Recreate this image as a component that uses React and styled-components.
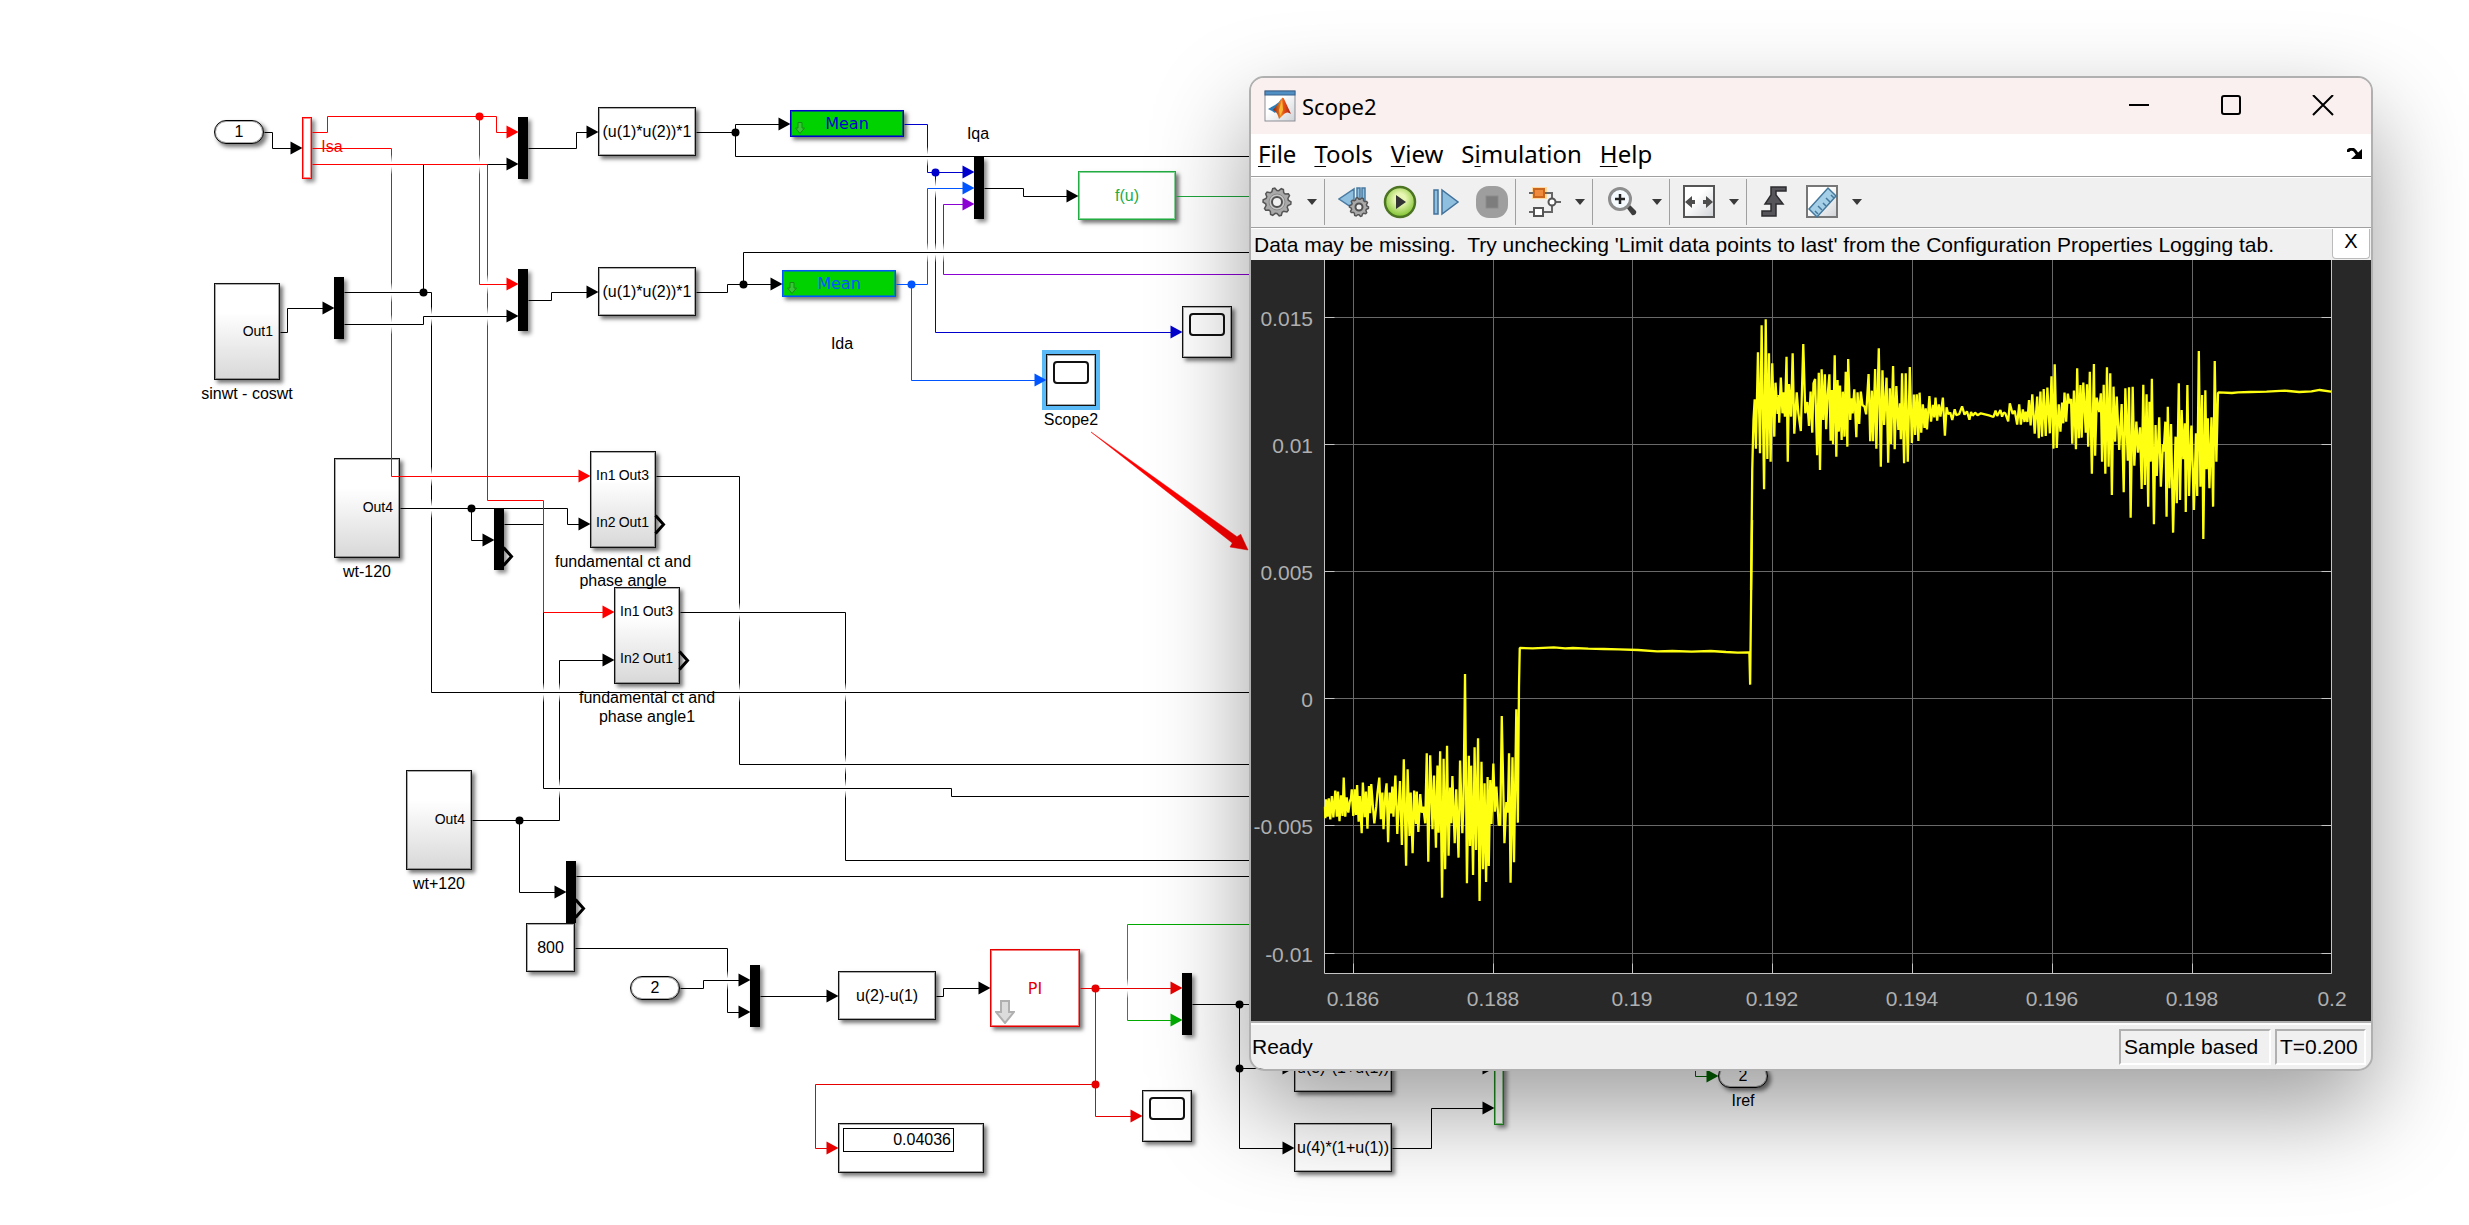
import React from 'react'
import styled, { createGlobalStyle } from 'styled-components'

const BLACK = '#000'
const RED = '#ff0000'
const CRIMSON = '#e60000'
const NAVY = '#0000cd'
const BLUE = '#0055ff'
const PURPLE = '#8b00d3'
const GREEN = '#00aa00'
const LEAF = '#1ea43c'
const FOREST = '#006400'

// signal lines, [color, path]
const wires = [
  [BLACK, 'M264 132H272V148H292'],
  [BLACK, 'M423 292V164H508'],
  [RED, 'M312 132H327V116H496V132H508'],
  [RED, 'M312 148H391V476H580'],
  [RED, 'M479 116V284H508'],
  [BLACK, 'M280 332H287V308H324'],
  [BLACK, 'M344 292H431V692H1252'],
  [BLACK, 'M344 324H423V316H508'],
  [BLACK, 'M528 148H576V132H588'],
  [BLACK, 'M528 300H551V292H588'],
  [BLACK, 'M696 132H735M780 124H735V156H1252'],
  [BLACK, 'M696 292H727V284H772M743 284V252H1252'],
  [NAVY, 'M904 124H927V172H964M935 172V332H1172'],
  [BLUE, 'M896 284H927V188H964M911 284V380H1036'],
  [PURPLE, 'M1252 274H943V204H964'],
  [BLACK, 'M984 188H1023V196H1068'],
  [LEAF, 'M1176 196H1252'],
  [BLACK, 'M400 508H567V524H580M471 508V540H484'],
  [BLACK, 'M504 524H543V788H951V796H1252'],
  [RED, 'M312 164H487V500H543V612H604'],
  [BLACK, 'M656 476H739V764H1252'],
  [BLACK, 'M680 612H845V860H1252'],
  [BLACK, 'M472 820H559V660H604M519 820V892H556'],
  [BLACK, 'M576 876H1252'],
  [BLACK, 'M575 948H727V1012H740'],
  [BLACK, 'M680 988H703V980H740'],
  [BLACK, 'M760 996H828'],
  [BLACK, 'M936 996H943V988H980'],
  [GREEN, 'M1252 924H1127V1020H1172'],
  [CRIMSON, 'M1080 988H1172M1095 988V1116H1132M1095 1084H815V1148H828'],
  [BLACK, 'M1192 1004H1260M1239 1004V1148H1284M1239 1068H1284'],
  [BLACK, 'M1392 1148H1431V1108H1484M1450 1068H1484'],
  [FOREST, 'M1695 1040V1076H1708'],
]

// places where a vertical line fades out under a horizontal one
const crossings = [
  [391, 164, RED], [391, 292, BLACK], [391, 324, BLACK],
  [431, 316, BLACK], [431, 476, RED], [431, 508, BLACK],
  [479, 164, RED], [487, 284, RED], [487, 316, BLACK],
  [927, 156, BLACK], [927, 252, BLACK], [935, 188, BLUE],
  [935, 252, BLACK], [943, 252, BLACK],
  [543, 692, BLACK], [559, 692, BLACK], [559, 788, BLACK],
  [739, 612, BLACK], [739, 692, BLACK],
  [845, 692, BLACK], [845, 764, BLACK], [845, 788, BLACK],
  [727, 980, BLACK], [1127, 988, CRIMSON],
]

const arrows = [
  [302, 148, BLACK], [518, 132, RED], [518, 164, BLACK], [518, 284, RED],
  [518, 316, BLACK], [334, 308, BLACK], [598, 132, BLACK], [598, 292, BLACK],
  [790, 124, BLACK], [782, 284, BLACK], [974, 172, NAVY], [974, 188, BLUE],
  [974, 204, PURPLE], [1078, 196, BLACK], [1182, 332, NAVY], [1046, 380, BLUE],
  [590, 476, RED], [590, 524, BLACK], [494, 540, BLACK], [614, 612, RED],
  [614, 660, BLACK], [566, 892, BLACK], [750, 980, BLACK], [750, 1012, BLACK],
  [838, 996, BLACK], [990, 988, BLACK], [1182, 988, CRIMSON], [1182, 1020, GREEN],
  [1142, 1116, CRIMSON], [838, 1148, CRIMSON], [1294, 1068, BLACK],
  [1294, 1148, BLACK], [1494, 1108, BLACK], [1494, 1068, BLACK], [1718, 1076, FOREST],
]

const dots = [
  [479, 116, RED], [423, 292, BLACK], [735, 132, BLACK], [743, 284, BLACK],
  [935, 172, NAVY], [911, 284, BLUE], [471, 508, BLACK], [519, 820, BLACK],
  [1095, 988, CRIMSON], [1095, 1084, CRIMSON], [1239, 1004, BLACK], [1239, 1068, BLACK],
]

const openPorts = [[504, 556], [656, 524], [680, 660], [576, 908]]

const muxes = [
  [518, 117], [518, 269], [334, 277], [974, 157], [494, 508], [566, 861], [750, 965], [1182, 973],
]

const functions = [
  { x: 598, y: 107, text: '(u(1)*u(2))*1' },
  { x: 598, y: 267, text: '(u(1)*u(2))*1' },
  { x: 838, y: 971, text: 'u(2)-u(1)' },
  { x: 1294, y: 1043, text: 'u(3)*(1+u(1))' },
  { x: 1294, y: 1123, text: 'u(4)*(1+u(1))' },
  { x: 1078, y: 171, text: 'f(u)', color: '#22ac42' },
]

const captions = [
  { x: 247, y: 384, text: 'sinwt - coswt' },
  { x: 367, y: 562, text: 'wt-120' },
  { x: 439, y: 874, text: 'wt+120' },
  { x: 623, y: 552, text: 'fundamental ct and\nphase angle' },
  { x: 647, y: 688, text: 'fundamental ct and\nphase angle1' },
  { x: 978, y: 124, text: 'Iqa' },
  { x: 842, y: 334, text: 'Ida' },
  { x: 1071, y: 410, text: 'Scope2' },
  { x: 1743, y: 1091, text: 'Iref' },
  { x: 332, y: 137, text: 'Isa', color: RED },
]

const xTicks = [
  [102, '0.186'], [242, '0.188'], [381, '0.19'], [521, '0.192'],
  [661, '0.194'], [801, '0.196'], [941, '0.198'], [1081, '0.2'],
]
const yTicks = [
  [57, '0.015'], [184, '0.01'], [311, '0.005'], [438, '0'], [565, '-0.005'], [693, '-0.01'],
]

const traceStart =
  'M222 860 223 895 225 838 229 890 232 835 236 898 240 828 244 892 249 812 253 890 256 815 260 904 264 826 268 888 271 773 275 890 279 832 283 878 287 845 290 835 292 808 296 888 300 808 303 885 306 795 310 905 313 828 318 940 321 788 326 892 329 815 333 926 337 798 340 880 343 792 347 855 351 910 356 860 359 820 364 773 368 898 372 818 375 928 380 820 383 790 387 967 391 818 395 880 398 800 401 890 406 767 411 942 418 783 423 975 428 718 434 1037 438 748 443 948 446 818 451 1000 455 812 460 912 462 815 466 936 471 822 475 878 479 860 484 910 488 700 492 1025 497 706 503 928 507 767 512 983 516 737 519 938 523 694 528 1133 532 716 536 1048 541 677 545 1007 549 803 552 910 555 768 561 970 565 808 571 1013 575 722 581 940 584 850 588 462 593 1090 598 707 601 978 604 737 609 1065 613 682 617 990 622 655 626 1143 631 725 635 1048 639 790 643 1086 647 771 650 1038 654 780 657 912 662 731 666 875 670 800 676 915 680 915 684 588 691 970 696 846 700 878 703 700 707 1088 712 712 716 1027 722 568 726 908 729 500 731 384 765 385 820 382 850 385 870 384 910 386 950 387 990 388 1040 390 1090 394 1130 393 1180 395 1230 393 1270 396 1300 398 1331 397 1333 494 1336 180 1338 0'

const traceEnd =
  'M27 960 30 600 33 450 36 388 39 536 44 247 49 550 53 166 59 658 63 148 67 567 71 250 75 575 79 280 84 500 87 338 92 432 95 375 96 458 100 323 104 430 107 367 110 440 114 260 117 575 120 342 125 440 129 250 133 491 139 367 143 430 149 483 155 222 160 430 165 396 169 468 173 365 177 488 180 340 184 327 189 556 193 308 196 600 200 298 204 450 208 313 211 478 215 372 219 313 222 512 225 360 228 523 232 256 236 560 239 330 242 485 245 347 249 510 252 365 256 500 259 305 263 530 265 267 270 450 273 385 276 430 280 358 285 502 288 367 292 462 296 365 300 405 305 410 309 433 315 312 319 514 323 362 326 514 331 297 334 536 340 235 345 590 349 301 353 465 359 323 363 578 367 355 370 522 375 288 379 538 383 348 388 480 392 400 394 508 397 310 402 580 406 310 411 575 416 291 421 519 426 374 429 495 433 373 437 513 440 368 444 488 448 403 452 474 455 415 458 478 464 378 468 455 473 405 476 442 479 383 483 452 487 403 491 440 497 383 502 497 506 412 510 432 515 428 520 450 526 418 530 436 537 432 544 409 550 434 556 424 562 449 566 426 570 437 576 428 582 436 590 430 600 433 610 436 621 441 626 422 630 438 638 420 642 440 646 428 650 430 657 454 661 400 668 432 673 422 679 464 684 403 688 464 693 418 697 456 700 425 704 456 708 390 712 466 716 373 722 491 728 380 732 505 736 365 740 500 744 357 749 498 753 353 759 490 763 319 768 536 771 283 776 534 781 403 785 485 789 398 792 460 795 368 799 455 803 371 807 400 811 387 814 521 818 362 823 538 826 295 830 505 834 345 837 503 841 338 847 488 850 343 853 530 857 305 862 611 867 282 870 557 874 383 880 426 884 370 887 575 891 344 895 611 899 292 903 590 907 310 911 675 915 350 919 515 923 380 929 540 935 402 940 667 944 355 950 572 953 352 957 743 962 350 966 587 971 455 975 548 980 472 984 657 988 344 992 645 996 373 1000 710 1003 395 1006 575 1009 326 1014 763 1018 465 1021 618 1027 442 1031 650 1036 523 1038 545 1042 455 1045 740 1048 410 1052 655 1056 462 1061 788 1067 500 1070 700 1075 340 1078 690 1082 420 1086 568 1090 460 1092 726 1096 345 1100 678 1105 482 1106 467 1112 720 1117 490 1120 678 1124 243 1128 650 1132 375 1135 807 1140 361 1143 598 1146 445 1150 655 1155 442 1159 710 1163 273 1167 575 1171 370 1173 367 1205 369 1220 367 1250 366 1290 365 1335 362 1370 366 1400 364 1420 360 1448 365'

const Wires = () => (
  <WireLayer aria-hidden="true">
    <defs>
      <linearGradient id="fade" x1="0" y1="0" x2="0" y2="1">
        <stop offset="0" stopColor="#fff" stopOpacity="0" />
        <stop offset=".4" stopColor="#fff" />
        <stop offset=".6" stopColor="#fff" />
        <stop offset="1" stopColor="#fff" stopOpacity="0" />
      </linearGradient>
    </defs>
    <g transform="translate(.5 .5)">
      {wires.map(([color, d]) => <path key={d} d={d} stroke={color} fill="none" />)}
      {crossings.map(([x, y, color]) => (
        <g key={`${x}-${y}`}>
          <rect x={x - 1.5} y={y - 10} width="3" height="20" fill="url(#fade)" />
          <path d={`M${x - 3} ${y}h6`} stroke={color} />
        </g>
      ))}
      {arrows.map(([x, y, color]) => (
        <path key={`${x}-${y}`} d={`M${x} ${y - 0.5}l-12 -6.5v13z`} fill={color} />
      ))}
      {dots.map(([x, y, color]) => <circle key={`${x}-${y}`} cx={x} cy={y} r="4" fill={color} />)}
      {openPorts.map(([x, y]) => (
        <path key={`${x}-${y}`} d={`M${x - 1} ${y - 9}l8 9l-8 9`} stroke="#000" strokeWidth="3" fill="none" />
      ))}
    </g>
    <path d="M1091 432L1237 536.7L1240.7 534.3L1248 550L1230 547L1232.3 543Z" fill="red" stroke="red" strokeWidth=".5" />
  </WireLayer>
)

const Subsystem = ({ ins = [], outs, ...place }) => (
  <Block {...place} $shaded>
    <PortGrid>
      <PortColumn>{ins.map((name) => <Port key={name}>{name}</Port>)}</PortColumn>
      <PortColumn $right>{outs.map((name) => <Port key={name}>{name}</Port>)}</PortColumn>
    </PortGrid>
  </Block>
)

const ScopeBlock = ({ $selected, ...place }) => (
  <Block {...place} $w={50} $h={52} $selected={$selected} $top>
    <ScopeScreen />
  </Block>
)

const MaskArrow = ({ width, height, fill, stroke }) => (
  <CornerArrow width={width} height={height} viewBox="0 0 20 24">
    <path d="M6 1h8v11h5l-9 11L1 12h5z" fill={fill} stroke={stroke} strokeWidth="2" />
  </CornerArrow>
)

const Diagram = () => (
  <>
    {muxes.map(([x, y]) => <Mux key={`${x}-${y}`} $x={x} $y={y} />)}
    <Mux $x={302} $y={117} $outline="#ff0000" />
    <Mux $x={1494} $y={1063} $outline="#1c8a1c" />

    <Terminal $x={214} $y={120}>1</Terminal>
    <Terminal $x={630} $y={976}>2</Terminal>
    <Terminal $x={1718} $y={1064}>2</Terminal>

    {functions.map(({ x, y, text, color }) => (
      <Block key={`${x}-${y}`} $x={x} $y={y} $w={98} $h={49} $color={color}>{text}</Block>
    ))}
    <Block $x={526} $y={923} $w={49} $h={49}>800</Block>

    <Subsystem $x={214} $y={283} $w={66} $h={97} outs={['Out1']} />
    <Subsystem $x={334} $y={458} $w={66} $h={100} outs={['Out4']} />
    <Subsystem $x={406} $y={770} $w={66} $h={100} outs={['Out4']} />
    <Subsystem $x={590} $y={451} $w={66} $h={97} ins={['In1', 'In2']} outs={['Out3', 'Out1']} />
    <Subsystem $x={614} $y={587} $w={66} $h={97} ins={['In1', 'In2']} outs={['Out3', 'Out1']} />

    <MeanBlock $x={790} $y={110} $w={114} $h={27} $color={NAVY}>
      Mean
      <MaskArrow width="10" height="12" fill="#37c437" stroke="#168f16" />
    </MeanBlock>
    <MeanBlock $x={782} $y={270} $w={114} $h={27} $color={BLUE}>
      Mean
      <MaskArrow width="10" height="12" fill="#37c437" stroke="#168f16" />
    </MeanBlock>
    <PiBlock $x={990} $y={949} $w={90} $h={78} $color={CRIMSON}>
      PI
      <MaskArrow width="20" height="24" fill="#dcdcdc" stroke="#b0b0b0" />
    </PiBlock>

    <ScopeBlock $x={1182} $y={306} />
    <ScopeBlock $x={1046} $y={354} $selected />
    <ScopeBlock $x={1142} $y={1090} />
    <Block $x={838} $y={1123} $w={146} $h={50} $top>
      <Readout>0.04036</Readout>
    </Block>

    {captions.map(({ x, y, text, color }) => (
      <Caption key={text} $x={x} $y={y} $color={color}>{text}</Caption>
    ))}
    <Wires />
  </>
)

const MatlabIcon = () => (
  <svg width="32" height="32" viewBox="0 0 32 32">
    <defs>
      <linearGradient id="paper" x1="0" y1="0" x2="1" y2="1">
        <stop offset=".4" stopColor="#fff" />
        <stop offset="1" stopColor="#cfd2d6" />
      </linearGradient>
      <linearGradient id="flame" x1="0" y1="0" x2="1" y2="0">
        <stop offset="0" stopColor="#8c1a0c" />
        <stop offset=".45" stopColor="#f08a24" />
        <stop offset=".6" stopColor="#e8501a" />
        <stop offset="1" stopColor="#a3200e" />
      </linearGradient>
    </defs>
    <rect x="1" y="1" width="30" height="30" fill="url(#paper)" stroke="#8b8f96" />
    <rect x="1" y="1" width="30" height="4" fill="#4f8fc4" stroke="#38618c" />
    <path d="M4 19l7-4 4-3 2-3-1 8-5 6-3-2z" fill="#2c7fb8" />
    <path d="M9 20l5-6 4-6c1-1 2 0 3 3l6 13c-3-2-5-2-7 0l-5 5c-1-4-2-7-6-9z" fill="url(#flame)" />
    <path d="M15 20l3-10 1 10-3 6z" fill="#f7b733" />
  </svg>
)

const gearPath = (cx, cy, r) => {
  const teeth = 10
  const pts = []
  for (let i = 0; i < teeth * 4; i++) {
    const a = (i / (teeth * 4)) * Math.PI * 2
    const rad = i % 4 < 2 ? r : r * 0.82
    pts.push(`${(cx + rad * Math.cos(a)).toFixed(1)} ${(cy + rad * Math.sin(a)).toFixed(1)}`)
  }
  return `M${pts.join('L')}Z`
}

const GearIcon = () => (
  <svg width="32" height="32" viewBox="0 0 32 32">
    <path d={gearPath(16, 16, 14)} fill="#a9a9a9" stroke="#555" strokeWidth="1.5" />
    <circle cx="16" cy="16" r="8" fill="#c4c4c4" stroke="#8a8a8a" />
    <circle cx="16" cy="16" r="5" fill="#f0f0f0" stroke="#505050" strokeWidth="2" />
  </svg>
)

const StepBackIcon = () => (
  <svg width="32" height="32" viewBox="0 0 32 32">
    <path d="M16 3v20L1 13zM19 2h3v22h-3zM24 2h3v22h-3z" fill="#8fbfdf" stroke="#4a7ba3" strokeWidth="1.5" />
    <path d={gearPath(21, 21, 9.5)} fill="#a9a9a9" stroke="#555" strokeWidth="1.5" />
    <circle cx="21" cy="21" r="3.5" fill="#f0f0f0" stroke="#505050" strokeWidth="2" />
  </svg>
)

const RunIcon = () => (
  <svg width="34" height="34" viewBox="0 0 34 34">
    <defs>
      <radialGradient id="run" cx=".5" cy=".4" r=".6">
        <stop offset=".3" stopColor="#e9f7b4" />
        <stop offset="1" stopColor="#7cc12c" />
      </radialGradient>
    </defs>
    <circle cx="17" cy="17" r="15" fill="url(#run)" stroke="#4c7422" strokeWidth="2.5" />
    <path d="M13 10l10 7-10 7z" fill="#333" />
  </svg>
)

const StepForwardIcon = () => (
  <svg width="32" height="32" viewBox="0 0 32 32">
    <path d="M4 4h4v24H4zM12 4v24l16-12z" fill="#8fbfdf" stroke="#41729b" strokeWidth="1.5" />
  </svg>
)

const StopIcon = () => (
  <svg width="34" height="34" viewBox="0 0 34 34">
    <rect x="1" y="1" width="32" height="32" rx="13" fill="#9e9e9e" />
    <rect x="11" y="11" width="12" height="12" fill="#7d7d7d" stroke="#8b8b8b" />
  </svg>
)

const BlocksIcon = () => (
  <svg width="32" height="32" viewBox="0 0 32 32">
    <rect x="3" y="1" width="15" height="12" fill="#ffd9a0" />
    <path d="M0 7h4M16 7h7v6M0 26h5M14 26h9v-7M26 16h6" stroke="#666" strokeWidth="2" fill="none" />
    <rect x="5" y="3" width="10" height="8" fill="#ef8a3c" stroke="#c9651c" strokeWidth="2" />
    <rect x="5" y="22" width="9" height="8" fill="#fff" stroke="#555" strokeWidth="2" />
    <circle cx="23" cy="16" r="3.5" fill="#fff" stroke="#555" strokeWidth="2" />
  </svg>
)

const ZoomIcon = () => (
  <svg width="32" height="32" viewBox="0 0 32 32">
    <path d="M20 21l3-3 7 7c1 2-1 5-4 4z" fill="#3c3c3c" />
    <circle cx="14" cy="13" r="10.5" fill="#f4fafd" stroke="#8d8d8d" strokeWidth="3" />
    <path d="M14 8v10M9 13h10" stroke="#222" strokeWidth="2.5" />
  </svg>
)

const FitIcon = () => (
  <svg width="32" height="34" viewBox="0 0 32 34">
    <rect x="1" y="1" width="30" height="31" fill="url(#paper)" stroke="#555" strokeWidth="2" />
    <path d="M2 17l7-6v4h3v4H9v4zM30 17l-7-6v4h-3v4h3v4z" fill="#4d4d4d" />
  </svg>
)

const TriggerIcon = () => (
  <svg width="32" height="32" viewBox="0 0 32 32">
    <path d="M2 25h9v-7H5L11 9V1h15v4H16v4l7 9h-7v12H2z" fill="#55555a" stroke="#2c2c30" strokeWidth="1.5" />
  </svg>
)

const RulerIcon = () => (
  <svg width="32" height="34" viewBox="0 0 32 34">
    <rect x="1" y="1" width="30" height="31" fill="url(#paper)" stroke="#777" strokeWidth="2" />
    <path d="M3 24L22 3l8 8-19 21z" fill="#a5cfe6" stroke="#44789c" strokeWidth="1.5" />
    <path d="M12 29l-3-3M16 25l-4-4M20 21l-3-3M24 17l-4-4M28 13l-3-3" stroke="#44789c" strokeWidth="1.5" />
  </svg>
)

const Caret = ({ label }) => (
  <CaretButton aria-label={label}>
    <svg width="10" height="6" viewBox="0 0 10 6"><path d="M0 0h10L5 6z" fill="#3a3a3a" /></svg>
  </CaretButton>
)

const Plot = () => (
  <PlotSvg viewBox="0 0 1120 761" role="img" aria-label="Scope trace">
    <rect width="1120" height="761" fill="#282828" />
    <rect x="73" width="1008" height="713" fill="#000" />
    <g transform="translate(.5 .5)" stroke="#696969">
      {xTicks.slice(0, -1).map(([x]) => <path key={x} d={`M${x} -1V713`} />)}
      {yTicks.map(([y]) => <path key={y} d={`M73 ${y}H1080`} />)}
    </g>
    <g transform="translate(.5 .5)" stroke="#c4c4c4" fill="none">
      <path d="M73 -1V713H1080V-1" />
      {xTicks.map(([x]) => <path key={x} d={`M${x > 1080 ? 1080 : x} 703v10`} />)}
      {yTicks.map(([y]) => <path key={y} d={`M73 ${y}h10M1070 ${y}h10`} />)}
    </g>
    <g stroke="#ffff12" strokeWidth="2.3" fill="none" strokeLinejoin="bevel">
      <path d={traceStart} transform="translate(-11 260) scale(.3827 .3333)" vectorEffect="non-scaling-stroke" />
      <path d={traceEnd} transform="translate(489 10) scale(.4082 .3333)" vectorEffect="non-scaling-stroke" />
    </g>
    {xTicks.map(([x, text]) => <TickText key={text} x={x} y="746" textAnchor="middle">{text}</TickText>)}
    {yTicks.map(([y, text]) => <TickText key={text} x="62" y={y + 9} textAnchor="end">{text}</TickText>)}
  </PlotSvg>
)

const ScopeWindow = () => (
  <Window>
    <TitleBar>
      <MatlabIcon />
      <Title>Scope2</Title>
      <WindowButton aria-label="Minimize">
        <svg width="22" height="22" viewBox="0 0 22 22"><path d="M1 10h20" stroke="#000" strokeWidth="2" /></svg>
      </WindowButton>
      <WindowButton aria-label="Maximize">
        <svg width="22" height="22" viewBox="0 0 22 22">
          <rect x="2" y="1" width="18" height="18" rx="2" fill="none" stroke="#000" strokeWidth="2" />
        </svg>
      </WindowButton>
      <WindowButton aria-label="Close">
        <svg width="22" height="22" viewBox="0 0 22 22"><path d="M1 0l20 20M21 0L1 20" stroke="#000" strokeWidth="2" /></svg>
      </WindowButton>
    </TitleBar>
    <MenuBar>
      <MenuItem><u>F</u>ile</MenuItem>
      <MenuItem><u>T</u>ools</MenuItem>
      <MenuItem><u>V</u>iew</MenuItem>
      <MenuItem>S<u>i</u>mulation</MenuItem>
      <MenuItem><u>H</u>elp</MenuItem>
      <DockButton aria-label="Dock">
        <svg width="16" height="12" viewBox="0 0 16 12">
          <path d="M1 4c0-3 5-4 7-1l3 4" stroke="#000" strokeWidth="3" fill="none" />
          <path d="M15 1v10H4z" fill="#000" />
        </svg>
      </DockButton>
    </MenuBar>
    <ToolBar>
      <ToolButton aria-label="Configuration"><GearIcon /></ToolButton>
      <Caret label="Configuration options" />
      <Separator />
      <ToolButton aria-label="Step back"><StepBackIcon /></ToolButton>
      <ToolButton aria-label="Run"><RunIcon /></ToolButton>
      <ToolButton aria-label="Step forward"><StepForwardIcon /></ToolButton>
      <ToolButton aria-label="Stop"><StopIcon /></ToolButton>
      <Separator />
      <ToolButton aria-label="Highlight block"><BlocksIcon /></ToolButton>
      <Caret label="Highlight options" />
      <Separator />
      <ToolButton aria-label="Zoom"><ZoomIcon /></ToolButton>
      <Caret label="Zoom options" />
      <Separator />
      <ToolButton aria-label="Fit axes"><FitIcon /></ToolButton>
      <Caret label="Fit options" />
      <Separator />
      <ToolButton aria-label="Triggers"><TriggerIcon /></ToolButton>
      <ToolButton aria-label="Measurements"><RulerIcon /></ToolButton>
      <Caret label="Measurement options" />
    </ToolBar>
    <MessageBar>
      <Message>{"Data may be missing.  Try unchecking 'Limit data points to last' from the Configuration Properties Logging tab."}</Message>
      <DismissButton aria-label="Dismiss message">X</DismissButton>
    </MessageBar>
    <Plot />
    <StatusBar>
      <StatusText>Ready</StatusText>
      <StatusCell $width={152}>Sample based</StatusCell>
      <StatusCell $width={91}>T=0.200</StatusCell>
    </StatusBar>
  </Window>
)

const App = () => (
  <>
    <GlobalStyle />
    <Canvas>
      <Diagram />
      <ScopeWindow />
    </Canvas>
  </>
)

export default App

const GlobalStyle = createGlobalStyle`
  * {
    box-sizing: border-box;
  }

  body {
    margin: 0;
    background: #fff;
    font-family: "Liberation Sans", Arial, sans-serif;
    color: #000;
  }

  button {
    padding: 0;
    border: 0;
    background: none;
    font: inherit;
    color: inherit;
  }
`

const Canvas = styled.main`
  position: relative;
  min-height: 100vh;
  overflow: hidden;
`

const Block = styled.div`
  position: absolute;
  left: ${(p) => p.$x}px;
  top: ${(p) => p.$y}px;
  width: ${(p) => p.$w}px;
  height: ${(p) => p.$h}px;
  display: flex;
  justify-content: ${(p) => (p.$top ? 'flex-start' : 'center')};
  align-items: ${(p) => (p.$top ? 'flex-start' : 'center')};
  border: 1px solid ${(p) => p.$color || '#111'};
  background: ${(p) => (p.$shaded ? 'linear-gradient(#fff 30%, #d8d8d8)' : '#fff')};
  box-shadow: inset 0 0 0 1px ${(p) => (p.$color ? `${p.$color}88` : '#0005')},
    ${(p) => (p.$selected ? '0 0 0 4px #5ab9f7' : '3px 3px 4px #0008')};
  color: ${(p) => p.$color || '#000'};
  font-size: 16px;
  white-space: nowrap;
`

const MeanBlock = styled(Block)`
  background: #00d200;
  font-family: "DejaVu Sans", sans-serif;
`

const PiBlock = styled(Block)`
  font-family: "DejaVu Sans", sans-serif;
`

// sits over the lower left corner of a masked block
const CornerArrow = styled.svg`
  position: absolute;
  left: 4px;
  bottom: 2px;
`

const PortGrid = styled.div`
  display: flex;
  justify-content: space-between;
  width: 100%;
  height: 100%;
  padding: 0 6px 2px 5px;
  font-size: 14px;
`

const PortColumn = styled.div`
  display: flex;
  flex-direction: column;
  text-align: ${(p) => (p.$right ? 'right' : 'left')};
`

const Port = styled.span`
  flex: 1;
  display: flex;
  align-items: center;
`

const ScopeScreen = styled.div`
  width: 36px;
  height: 23px;
  margin: 6px;
  border: 2px solid #111;
  border-radius: 4px;
`

const Readout = styled.output`
  width: 111px;
  height: 24px;
  margin: 4px;
  padding-right: 2px;
  border: 1px solid #000;
  line-height: 22px;
  text-align: right;
`

const Mux = styled.div`
  position: absolute;
  left: ${(p) => p.$x}px;
  top: ${(p) => p.$y}px;
  width: 10px;
  height: 62px;
  border: ${(p) => (p.$outline ? `1px solid ${p.$outline}` : '0')};
  background: ${(p) => (p.$outline ? '#fff' : '#000')};
  box-shadow: inset 0 0 0 1px ${(p) => (p.$outline ? `${p.$outline}77` : '#000')}, 3px 3px 4px #0007;
`

const Terminal = styled.div`
  position: absolute;
  left: ${(p) => p.$x}px;
  top: ${(p) => p.$y}px;
  width: 50px;
  height: 24px;
  border: 1px solid #000;
  border-radius: 12px;
  background: #fff;
  box-shadow: inset 0 0 0 1px #0005, 3px 3px 4px #0008;
  font-size: 16px;
  line-height: 22px;
  text-align: center;
`

const Caption = styled.div`
  position: absolute;
  left: ${(p) => p.$x}px;
  top: ${(p) => p.$y}px;
  transform: translateX(-50%);
  color: ${(p) => p.$color || '#000'};
  font-size: 16px;
  line-height: 19px;
  text-align: center;
  white-space: pre;
`

const WireLayer = styled.svg`
  position: absolute;
  inset: 0;
  width: 100%;
  height: 100%;
  pointer-events: none;
`

const Window = styled.section`
  position: absolute;
  left: 1249px;
  right: 96px;
  top: 76px;
  min-width: 900px;
  border: 2px solid #b0b0b0;
  border-radius: 15px;
  background: #f0f0f0;
  background-clip: padding-box;
  box-shadow: 0 40px 96px rgba(0, 0, 0, 0.38);
  overflow: hidden;
`

const TitleBar = styled.header`
  display: flex;
  align-items: center;
  height: 56px;
  padding: 0 2px 0 13px;
  background: #f9f0ef;
`

const Title = styled.h1`
  flex: 1;
  margin: 0 0 0 6px;
  font-family: "Noto Sans", sans-serif;
  font-size: 22px;
  font-weight: 400;
`

const WindowButton = styled.button`
  display: flex;
  justify-content: center;
  align-items: center;
  width: 92px;
  height: 56px;
`

const MenuBar = styled.nav`
  display: flex;
  align-items: center;
  gap: 18px;
  height: 43px;
  padding: 0 8px 2px 7px;
  border-bottom: 1px solid #a0a0a0;
  background: #fff;
  font-family: "Noto Sans", sans-serif;
  font-size: 24px;
`

const MenuItem = styled.button`
  line-height: 40px;

  u {
    text-decoration-thickness: 1px;
    text-underline-offset: 3px;
  }
`

const DockButton = styled.button`
  display: flex;
  margin-left: auto;
`

const ToolBar = styled.div`
  display: flex;
  align-items: center;
  height: 51px;
  padding: 0 3px;
  border-bottom: 1px solid #a0a0a0;
  box-shadow: inset 0 1px 0 #fff;
`

const ToolButton = styled.button`
  display: flex;
  justify-content: center;
  align-items: center;
  width: 46px;
  height: 46px;
`

const CaretButton = styled.button`
  display: flex;
  justify-content: center;
  align-items: center;
  width: 24px;
  height: 46px;
`

const Separator = styled.span`
  width: 1px;
  height: 46px;
  margin-right: 6px;
  background: #a0a0a0;
`

const MessageBar = styled.div`
  display: flex;
  justify-content: space-between;
  height: 32px;
  padding: 1px 1px 1px 3px;
  box-shadow: inset 0 1px 0 #fff;
`

const Message = styled.p`
  margin: 0;
  font-size: 21px;
  line-height: 31px;
  white-space: pre;
`

const DismissButton = styled.button`
  width: 38px;
  height: 30px;
  border: 1px solid #bbb;
  border-top: 0;
  border-radius: 0 0 4px 4px;
  background: #fff;
  font-size: 20px;
  line-height: 22px;
  padding-bottom: 6px;
`

const PlotSvg = styled.svg`
  display: block;
  width: 100%;
  height: auto;
`

const TickText = styled.text`
  fill: #afafaf;
  font-size: 21px;
`

const StatusBar = styled.footer`
  display: flex;
  align-items: center;
  gap: 4px;
  height: 48px;
  padding: 2px 5px 0 1px;
  border-top: 2px solid #b0b0b0;
  box-shadow: inset 0 2px 0 #fff;
  font-size: 21px;
`

const StatusText = styled.span`
  flex: 1;
`

const StatusCell = styled.span`
  width: ${(p) => p.$width}px;
  height: 36px;
  padding-left: 3px;
  border: 2px solid;
  border-color: #b0b0b0 #fff #fff #b0b0b0;
  line-height: 32px;
`
